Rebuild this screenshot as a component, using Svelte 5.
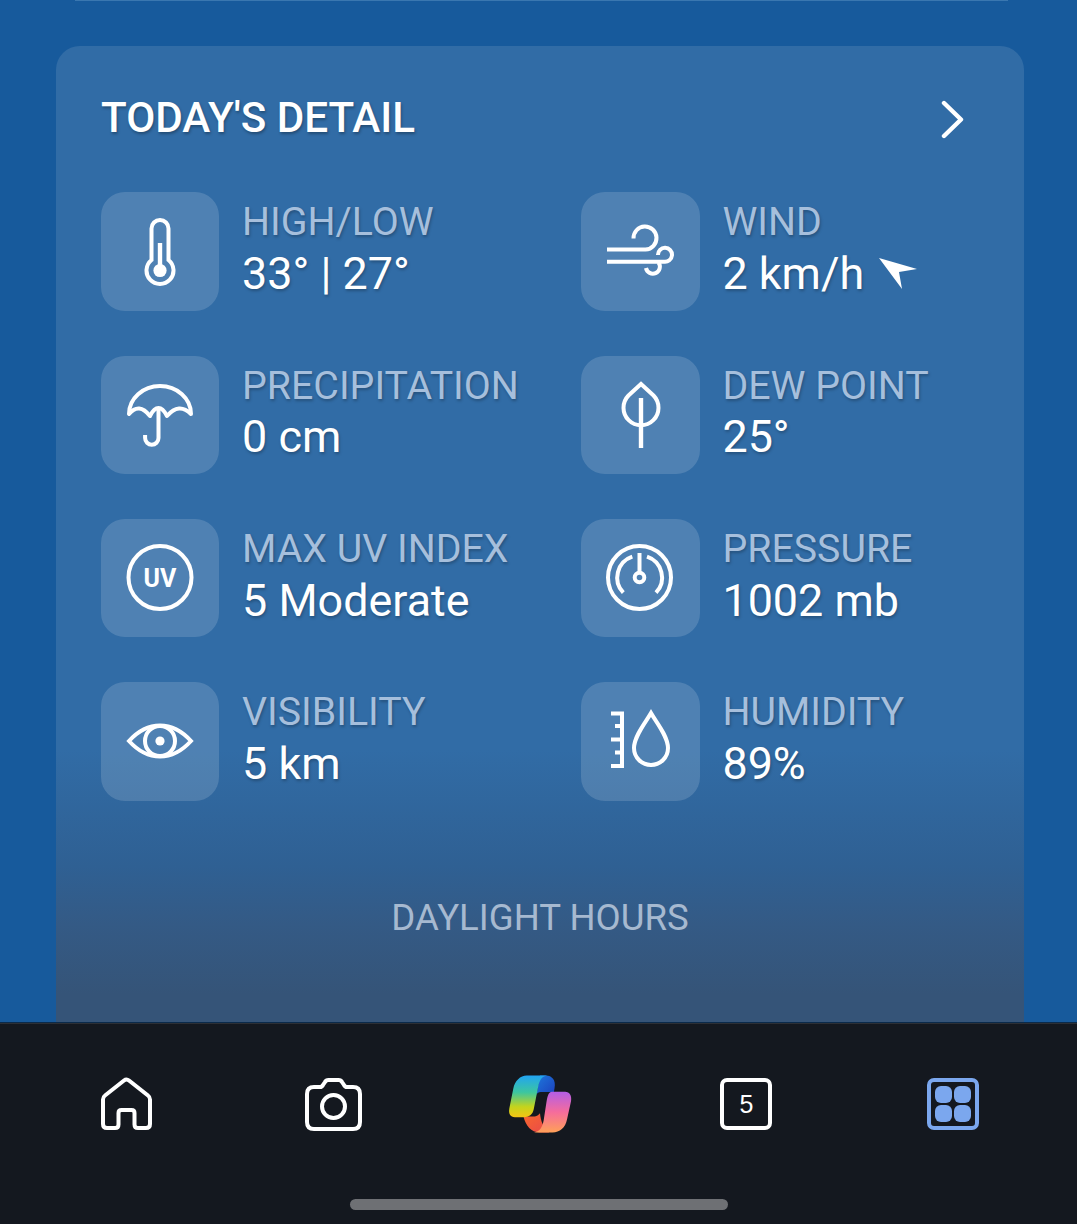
<script>
  const items = [
    { id: 'temp', label: 'HIGH/LOW', value: '33° | 27°' },
    { id: 'wind', label: 'WIND', value: '2 km/h', arrow: true },
    { id: 'rain', label: 'PRECIPITATION', value: '0 cm' },
    { id: 'dew', label: 'DEW POINT', value: '25°' },
    { id: 'uv', label: 'MAX UV INDEX', value: '5 Moderate' },
    { id: 'press', label: 'PRESSURE', value: '1002 mb' },
    { id: 'eye', label: 'VISIBILITY', value: '5 km' },
    { id: 'hum', label: 'HUMIDITY', value: '89%' }
  ];
</script>

<div class="page">
  <main class="main">
    <div class="topline"></div>
    <section class="card">
      <header class="head">
        <h2>TODAY'S DETAIL</h2>
        <svg class="chev" width="24" height="39" viewBox="0 0 24 39"><path d="M3 3 L20 19.5 L3 36" /></svg>
      </header>
      <div class="grid">
        {#each items as it}
          <div class="item">
            <div class="tile">
              <svg viewBox="0 0 118 118" width="118" height="118" class="ic">
                {#if it.id === 'temp'}
                  <path d="M50.5 68 V36.5 a8.5 8.5 0 0 1 17 0 V68 a13.5 13.5 0 1 1 -17 0 Z" />
                  <path d="M59 51 V78" stroke-width="4.4" />
                  <circle class="fill" cx="59" cy="78.5" r="6.6" />
                {:else if it.id === 'wind'}
                  <path d="M26 57.5 H64.5 A11.5 11.5 0 1 0 52.5 46.5" />
                  <path d="M26 69.7 H83 A7 7 0 1 0 77 63" />
                  <path d="M77.5 70.5 A7 7 0 1 1 65 76" />
                {:else if it.id === 'rain'}
                  <path d="M28 58 A31 28 0 0 1 90 58 Q78 46 66 60 Q62 52 57.5 52 Q53 52 49 60 Q38 46 28 58 Z" stroke-linejoin="round" />
                  <path d="M57.5 52 V82 a6.7 6.7 0 0 1 -13.4 0 v-3" />
                {:else if it.id === 'dew'}
                  <path d="M60 28 L47.5 39.5 A17.5 17.5 0 1 0 72.5 39.5 Z" />
                  <path d="M60 42 V92" stroke-width="4.4" />
                {:else if it.id === 'uv'}
                  <circle cx="59" cy="58.5" r="31.5" />
                  <text x="59" y="67.5" class="uvtext">UV</text>
                {:else if it.id === 'press'}
                  <circle cx="58.5" cy="58.5" r="31.5" />
                  <path d="M51.3 37.7 A22 22 0 0 0 42.3 73.7" />
                  <path d="M66 37.7 A22 22 0 0 1 75 73.7" />
                  <path d="M58.5 34 V53" />
                  <circle cx="58.5" cy="58.5" r="4.8" />
                {:else if it.id === 'eye'}
                  <path d="M28 59 C38 48 48 43.5 59 43.5 C70 43.5 80 48 90 59 C80 70 70 74.5 59 74.5 C48 74.5 38 70 28 59 Z" />
                  <circle cx="59" cy="59" r="15" />
                  <circle class="fill" cx="59" cy="59" r="4.6" />
                {:else if it.id === 'hum'}
                  <path d="M30 31.5 H41 V84 H30" />
                  <path d="M34 44 H41 M30 57.5 H41 M34 70.5 H41" />
                  <path d="M70 31 C65 40 53 54 53 66 A17 17 0 0 0 87 66 C87 54 75 40 70 31 Z" />
                {/if}
              </svg>
            </div>
            <div class="txt">
              <div class="label">{it.label}</div>
              <div class="value">
                <span>{it.value}</span>
                {#if it.arrow}
                  <svg class="arrow" width="38" height="33" viewBox="0 0 38 33"><path d="M0 1 L38 12 L20 15 L23 32 Z" /></svg>
                {/if}
              </div>
            </div>
          </div>
        {/each}
      </div>
      <div class="daylight">DAYLIGHT HOURS</div>
    </section>
  </main>

  <nav class="nav">
    <div class="tabs">
      <div class="tab">
        <svg class="line" width="52" height="54" viewBox="0 0 52 54">
          <path d="M2 22.5 Q2 20 4 18.5 L23 3.5 Q25.5 1.5 28 3.5 L47 18.5 Q49 20 49 22.5 V47 Q49 51 45 51 H37 Q33.5 51 33.5 47.5 V36 Q33.5 33 30.5 33 H20.5 Q17.5 33 17.5 36 V47.5 Q17.5 51 14 51 H6 Q2 51 2 47 Z" />
        </svg>
      </div>
      <div class="tab">
        <svg class="line" width="57" height="53" viewBox="0 0 57 53">
          <path d="M9 9 H15 Q17 9 18 7 L20 4 Q21 2 23.5 2 H33.5 Q36 2 37 4 L39 7 Q40 9 42 9 H48 Q55 9 55 16 V44 Q55 51 48 51 H9 Q2 51 2 44 V16 Q2 9 9 9 Z" />
          <circle cx="28.5" cy="28.5" r="11.5" />
        </svg>
      </div>
      <div class="tab">
        <svg width="66" height="60" viewBox="50 42 200 180">
          <defs>
            <linearGradient id="cpl" x1="0" y1="0" x2="0" y2="1">
              <stop offset="0" stop-color="#22a4f2" />
              <stop offset="0.4" stop-color="#3cc6a0" />
              <stop offset="0.75" stop-color="#c4d41c" />
              <stop offset="1" stop-color="#f4c414" />
            </linearGradient>
            <linearGradient id="cpr" x1="0" y1="0" x2="0" y2="1">
              <stop offset="0" stop-color="#b45ee6" />
              <stop offset="0.5" stop-color="#f56c9c" />
              <stop offset="1" stop-color="#ffa058" />
            </linearGradient>
            <linearGradient id="cpb" x1="0" y1="0" x2="1" y2="1">
              <stop offset="0" stop-color="#1d78dc" />
              <stop offset="1" stop-color="#1c3fbc" />
            </linearGradient>
            <linearGradient id="cpo" x1="0" y1="0" x2="1" y2="1">
              <stop offset="0" stop-color="#f8682c" />
              <stop offset="1" stop-color="#e8484c" />
            </linearGradient>
          </defs>
          <path fill="url(#cpb)" d="M150 46 H168 C186 46 199 60 194 84 L192 96 H152 C146 96 141 98 139 106 L145 70 Z" />
          <path fill="url(#cpo)" d="M100 170 H122 C134 170 142 170 150 160 C152 182 160 206 178 218 H148 C124 218 106 198 100 170 Z" />
          <path fill="url(#cpl)" d="M110 46 H172 C154 48 148 62 144 82 L131 148 C128 164 117 172 100 172 H74 C60 172 54 162 57 146 L69 86 C74 62 90 46 110 46 Z" />
          <path fill="url(#cpr)" d="M186 95 H226 C240 95 247 107 244 124 L232 178 C227 204 210 218 188 218 H132 C148 216 157 204 161 182 L170 124 C173 106 177 95 186 95 Z" />
        </svg>
      </div>
      <div class="tab"><div class="box">5</div></div>
      <div class="tab">
        <div class="apps"><i></i><i></i><i></i><i></i></div>
      </div>
    </div>
    <div class="handle"></div>
  </nav>
</div>

<style>
  :global(body) {
    margin: 0;
    background: #175a9c;
  }
  .page {
    width: 1077px;
    height: 1224px;
    display: flex;
    flex-direction: column;
    overflow: hidden;
    font-family: Roboto, "Liberation Sans", sans-serif;
    color: #fff;
  }
  .main {
    flex: 1;
    min-height: 0;
    background: #175a9c;
    overflow: hidden;
    border-bottom: 1px solid #0b2a4a;
  }
  .topline {
    height: 1px;
    margin: 0 69px 0 75px;
    background: #3a77b0;
  }
  .card {
    margin: 45px 53px 0 56px;
    height: 977px;
    border-radius: 24px 24px 0 0;
    padding: 0 45px;
    box-sizing: border-box;
    background: linear-gradient(180deg, #316ca6 0, #316ca6 72%, #2f6093 84%, #345a85 90%, #355478 97%);
  }
  .head {
    height: 146.3px;
    display: flex;
    align-items: center;
    justify-content: space-between;
    padding: 0 14px 0 0;
    box-sizing: border-box;
  }
  h2 {
    margin: 0 0 4px;
    font-size: 42.2px;
    font-weight: 500;
    text-shadow: 1px 2px 3px rgba(0, 0, 0, 0.3);
  }
  .chev {
    fill: none;
    stroke: #fff;
    stroke-width: 4.4;
    stroke-linecap: round;
    stroke-linejoin: round;
  }
  .grid {
    display: grid;
    grid-template-columns: 480.4px 1fr;
    grid-auto-rows: 118.33px;
    row-gap: 45px;
  }
  .item {
    display: flex;
    align-items: stretch;
    gap: 22.7px;
  }
  .tile {
    width: 118.33px;
    height: 118.33px;
    border-radius: 24px;
    background: rgba(255, 255, 255, 0.15);
    flex: none;
  }
  .ic {
    display: block;
    fill: none;
    stroke: #fff;
    stroke-width: 4;
  }
  .ic .fill {
    fill: #fff;
    stroke: none;
  }
  .uvtext {
    font-family: Roboto, sans-serif;
    font-size: 25px;
    font-weight: 700;
    fill: #fff;
    stroke: none;
    text-anchor: middle;
  }
  .txt {
    padding-top: 7.2px;
    text-shadow: 1px 2px 3px rgba(0, 0, 0, 0.25);
  }
  .label {
    font-size: 39.3px;
    line-height: 47.4px;
    color: #a6bfdc;
    white-space: nowrap;
  }
  .value {
    font-size: 44.9px;
    line-height: 53px;
    white-space: nowrap;
    display: flex;
    align-items: center;
    gap: 15px;
  }
  .arrow {
    fill: #fff;
    margin-top: 1px;
  }
  .daylight {
    margin-top: 97px;
    margin-left: -45px;
    margin-right: -45px;
    text-align: center;
    font-size: 36.6px;
    line-height: 40px;
    color: #a6b9d0;
  }
  .nav {
    height: 201px;
    flex: none;
    background: #14181f;
    border-top: 1px solid #2c2f35;
    box-sizing: border-box;
    display: flex;
    flex-direction: column;
    align-items: center;
  }
  .tabs {
    width: 100%;
    box-sizing: border-box;
    padding: 0 21px 0 24px;
    display: grid;
    grid-template-columns: repeat(5, 1fr);
    height: 160px;
    align-items: center;
  }
  .tab {
    display: flex;
    justify-content: center;
    align-items: center;
  }
  .line {
    fill: none;
    stroke: #fff;
    stroke-width: 4;
  }
  .box {
    width: 52px;
    height: 52px;
    box-sizing: border-box;
    border: 4px solid #fff;
    border-radius: 7px;
    display: flex;
    align-items: center;
    justify-content: center;
    font-family: "Liberation Sans", sans-serif;
    font-size: 25px;
  }
  .apps {
    width: 52px;
    height: 52px;
    box-sizing: border-box;
    border: 4px solid #7ba7ee;
    border-radius: 7px;
    padding: 4px;
    display: grid;
    grid-template-columns: 1fr 1fr;
    gap: 2.5px;
  }
  .apps i {
    display: block;
    background: #7ba7ee;
    border-radius: 6px;
  }
  .handle {
    width: 378px;
    height: 11px;
    margin-top: 15px;
    margin-left: 1px;
    border-radius: 6px;
    background: #6e7074;
  }
</style>
